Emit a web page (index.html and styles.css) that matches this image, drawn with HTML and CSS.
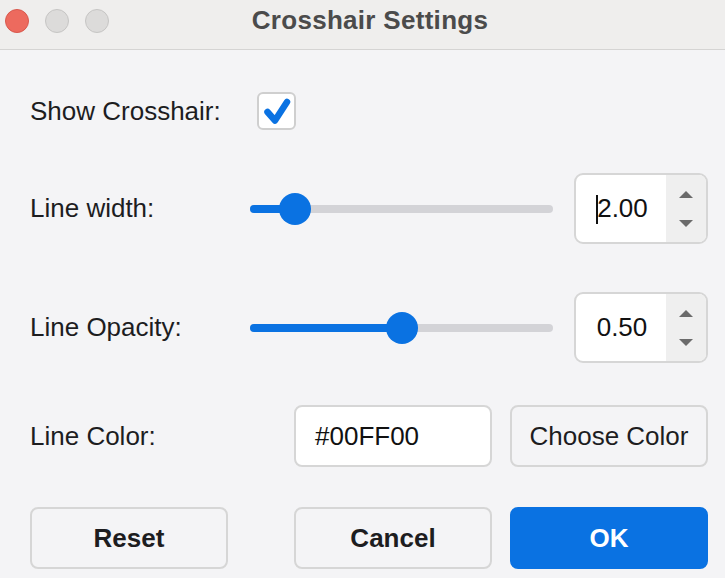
FILE: index.html
```html
<!DOCTYPE html>
<html>
<head>
<meta charset="utf-8">
<link rel="stylesheet" href="styles.css">
</head>
<body>
<div class="window">
  <div class="titlebar">
    <div class="lights">
      <span class="light red"></span>
      <span class="light grey"></span>
      <span class="light grey"></span>
    </div>
    <div class="title">Crosshair Settings</div>
  </div>
  <div class="content">
    <div class="row row-check">
      <div class="label label-check">Show Crosshair:</div>
      <div class="checkbox">
        <svg width="38" height="38" viewBox="0 0 38 38"><path d="M9.5 20 L17 28.5 L29 10" fill="none" stroke="#0a72e2" stroke-width="6.5" stroke-linecap="round" stroke-linejoin="round"/></svg>
      </div>
    </div>
    <div class="row row-width">
      <div class="label label-slider">Line width:</div>
      <div class="slider">
        <div class="track"></div>
        <div class="fill" style="width: calc(16px + 0.107 * (100% - 32px));"></div>
        <div class="thumb" style="left: calc(0.107 * (100% - 32px));"></div>
      </div>
      <div class="spin">
        <div class="spin-value"><span class="caret"></span>2.00</div>
        <div class="spin-arrows">
          <span class="arrow up"></span>
          <span class="arrow down"></span>
        </div>
      </div>
    </div>
    <div class="row row-opacity">
      <div class="label label-slider">Line Opacity:</div>
      <div class="slider">
        <div class="track"></div>
        <div class="fill" style="width: calc(16px + 0.5 * (100% - 32px));"></div>
        <div class="thumb" style="left: calc(0.5 * (100% - 32px));"></div>
      </div>
      <div class="spin">
        <div class="spin-value">0.50</div>
        <div class="spin-arrows">
          <span class="arrow up"></span>
          <span class="arrow down"></span>
        </div>
      </div>
    </div>
    <div class="row row-color">
      <div class="label label-color">Line Color:</div>
      <div class="field">#00FF00</div>
      <div class="btn btn-choose">Choose Color</div>
    </div>
    <div class="row row-buttons">
      <div class="btn btn-bold">Reset</div>
      <div class="btn btn-bold btn-cancel">Cancel</div>
      <div class="btn btn-bold btn-ok">OK</div>
    </div>
  </div>
</div>
</body>
</html>
```

FILE: styles.css
```css
* { box-sizing: border-box; }
html, body {
  margin: 0;
  padding: 0;
  background: #f4f4f6;
}
body {
  font-family: "Liberation Sans", Arial, sans-serif;
  color: #1d1d1f;
}
.window {
  width: 725px;
  height: 578px;
  background: #f4f4f6;
  overflow: hidden;
}
.titlebar {
  height: 50px;
  background: #efeeed;
  border-bottom: 1px solid #d5d4d3;
  display: flex;
  align-items: center;
  position: relative;
}
.lights {
  display: flex;
  gap: 16px;
  padding-left: 5px;
  margin-top: -8px;
}
.light {
  width: 24px;
  height: 24px;
  border-radius: 50%;
  display: block;
}
.light.red {
  background: #ed6a5e;
  border: 1px solid #d8584d;
}
.light.grey {
  background: #dcdbda;
  border: 1px solid #c6c5c4;
}
.title {
  flex: 1;
  text-align: center;
  font-weight: bold;
  font-size: 26px;
  color: #4b4b4b;
  margin-top: -9px;
  padding-right: 94px;
  letter-spacing: 0.3px;
}
.content {
  padding: 0 17px 0 30px;
  display: flex;
  flex-direction: column;
}
.row {
  display: flex;
  align-items: center;
}
.label {
  font-size: 26px;
  flex: none;
}
.row-check { margin-top: 42px; height: 38px; }
.label-check { width: 227px; }
.checkbox {
  width: 39px;
  height: 38px;
  background: #fff;
  border: 2px solid #cfcfcf;
  border-radius: 6px;
  display: flex;
  align-items: center;
  justify-content: center;
}
.checkbox svg { display: block; margin: -2px; }

.row-width { margin-top: 43px; height: 71px; }
.row-opacity { margin-top: 48px; height: 71px; }
.label-slider { width: 220px; }
.slider {
  position: relative;
  width: 303px;
  height: 32px;
  flex: none;
}
.track {
  position: absolute;
  left: 0; right: 0;
  top: 12px;
  height: 8px;
  border-radius: 4px;
  background: #d3d3d7;
}
.fill {
  position: absolute;
  left: 0;
  top: 12px;
  height: 8px;
  border-radius: 4px;
  background: #0a72e2;
}
.thumb {
  position: absolute;
  top: 0;
  width: 32px;
  height: 32px;
  border-radius: 50%;
  background: #0a72e2;
}
.spin {
  margin-left: 21px;
  width: 135px;
  height: 71px;
  border: 2px solid #d6d6d6;
  border-radius: 9px;
  background: #fff;
  display: flex;
  overflow: hidden;
}
.spin-value {
  flex: 1;
  display: flex;
  align-items: center;
  justify-content: center;
  font-size: 26px;
  color: #111;
  padding-left: 2px;
}
.caret {
  display: inline-block;
  width: 2px;
  height: 29px;
  background: #111;
  margin-right: -1px;
  margin-top: 2px;
}
.spin-arrows {
  width: 40px;
  background: #efefef;
  display: flex;
  flex-direction: column;
  align-items: center;
  justify-content: space-between;
  padding: 16px 0 15px;
}
.arrow {
  width: 0;
  height: 0;
  border-left: 7px solid transparent;
  border-right: 7px solid transparent;
}
.arrow.up { border-bottom: 7px solid #6b6b6b; }
.arrow.down { border-top: 7px solid #6b6b6b; }

.row-color { margin-top: 42px; height: 62px; }
.label-color { width: 264px; }
.field {
  width: 198px;
  height: 62px;
  background: #fff;
  border: 2px solid #d6d6d6;
  border-radius: 8px;
  font-size: 26px;
  color: #111;
  display: flex;
  align-items: center;
  padding-left: 19px;
}
.btn {
  width: 198px;
  height: 62px;
  border: 2px solid #d6d6d6;
  border-radius: 8px;
  background: #f4f4f6;
  font-size: 26px;
  color: #1d1d1f;
  display: flex;
  align-items: center;
  justify-content: center;
  flex: none;
}
.btn-choose { margin-left: 18px; }
.row-buttons { margin-top: 40px; height: 62px; }
.btn-bold { font-weight: bold; }
.btn-cancel { margin-left: 66px; }
.btn-ok {
  margin-left: 18px;
  background: #0a72e2;
  border-color: #0a72e2;
  color: #fff;
}
```
